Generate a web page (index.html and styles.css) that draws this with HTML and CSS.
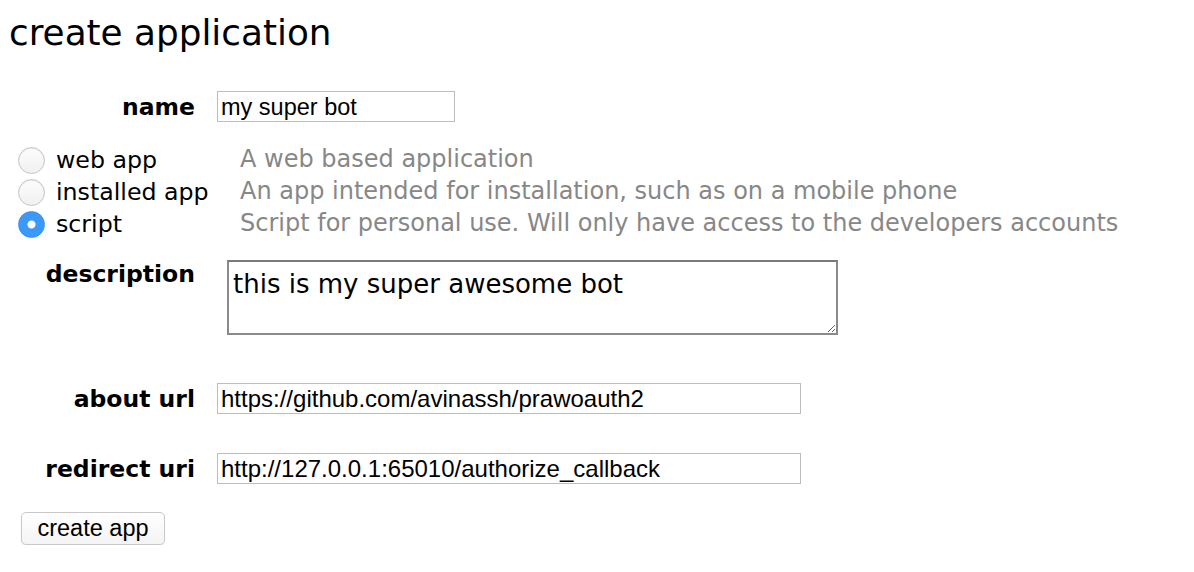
FILE: index.html
```html
<!DOCTYPE html>
<html>
<head>
<meta charset="utf-8">
<link rel="stylesheet" href="styles.css">
</head>
<body>
<h1 class="title">create application</h1>
<form class="form">
  <div class="row row-name">
    <label class="label">name</label>
    <input class="field field-short" type="text" value="my super bot">
  </div>
  <div class="types">
    <div class="type-list">
      <label class="type"><input class="radio" type="radio" name="t"><span>web app</span></label>
      <label class="type"><input class="radio" type="radio" name="t"><span>installed app</span></label>
      <label class="type"><input class="radio" type="radio" name="t" checked><span>script</span></label>
    </div>
    <div class="type-help">
      <div class="help">A web based application</div>
      <div class="help">An app intended for installation, such as on a mobile phone</div>
      <div class="help">Script for personal use. Will only have access to the developers accounts</div>
    </div>
  </div>
  <div class="row row-desc">
    <label class="label">description</label>
    <textarea class="area">this is my super awesome bot</textarea>
  </div>
  <div class="row row-about">
    <label class="label">about url</label>
    <input class="field field-long" type="text" value="https://github.com/avinassh/prawoauth2">
  </div>
  <div class="row row-redirect">
    <label class="label">redirect uri</label>
    <input class="field field-long" type="text" value="http://127.0.0.1:65010/authorize_callback">
  </div>
  <div class="actions">
    <button class="btn" type="button">create app</button>
  </div>
</form>
</body>
</html>
```

FILE: styles.css
```css
html, body {
  margin: 0;
  padding: 0;
  background: #fff;
}
body {
  font-family: "DejaVu Sans", Verdana, sans-serif;
  color: #000;
}
.title {
  margin: 0;
  padding: 9px 0 0 9px;
  font-size: 35.8px;
  font-weight: normal;
  line-height: 48px;
}
.form {
  display: flex;
  flex-direction: column;
}
.row {
  display: flex;
  align-items: center;
}
.label {
  width: 195px;
  text-align: right;
  font-weight: bold;
  font-size: 23.5px;
  flex: none;
}
.row-name {
  margin-top: 34px;
}
.field {
  box-sizing: border-box;
  margin: 0 0 0 22px;
  height: 31px;
  border: 1px solid #bdbdbd;
  padding: 1px 3px 0;
  font-family: "Liberation Sans", Arial, sans-serif;
  font-size: 23.5px;
  color: #000;
  outline: none;
}
.field-short { width: 238px; }
.field-long { width: 584px; font-size: 24px; }
.types {
  display: flex;
  margin-top: 22px;
  line-height: 32px;
}
.type-list {
  width: 240px;
  padding-left: 18px;
  box-sizing: border-box;
  display: flex;
  flex-direction: column;
  font-size: 23.7px;
}
.type {
  display: flex;
  align-items: center;
  height: 32px;
}
.radio {
  -webkit-appearance: none;
  appearance: none;
  margin: 0 11px 0 0;
  width: 27px;
  height: 27px;
  border-radius: 50%;
  border: 1px solid #c4c4c4;
  background: linear-gradient(#fdfdfd, #f0f0f0);
  box-shadow: inset 0 1px 1px rgba(0,0,0,0.08);
  flex: none;
}
.radio:checked {
  border-color: #3a8ff5;
  background: radial-gradient(circle, #fff 0 3.5px, #3b99fc 4.5px);
  box-shadow: none;
}
.type-help {
  display: flex;
  flex-direction: column;
  color: #878787;
  font-size: 24px;
  margin-top: -1px;
}
.help {
  height: 32px;
}
.row-desc {
  align-items: flex-start;
  margin-top: 20px;
}
.area {
  box-sizing: border-box;
  margin: 0 0 0 32px;
  width: 611px;
  height: 75px;
  border: 2px solid #8a8a8a;
  border-top-color: #7a7a7a;
  padding: 4px 4px;
  font-family: "DejaVu Sans", Verdana, sans-serif;
  font-size: 26px;
  line-height: 36px;
  color: #000;
  resize: both;
  outline: none;
}
.row-about {
  margin-top: 48px;
}
.row-redirect {
  margin-top: 39px;
}
.actions {
  margin-top: 28px;
  padding-left: 21px;
}
.btn {
  box-sizing: border-box;
  width: 144px;
  height: 33px;
  border: 1px solid #c8c8c8;
  border-radius: 5px;
  background: linear-gradient(#ffffff, #f4f4f4);
  box-shadow: 0 1px 1px rgba(0,0,0,0.08);
  font-family: "Liberation Sans", Arial, sans-serif;
  font-size: 23.5px;
  color: #000;
  padding: 0;
}
```
